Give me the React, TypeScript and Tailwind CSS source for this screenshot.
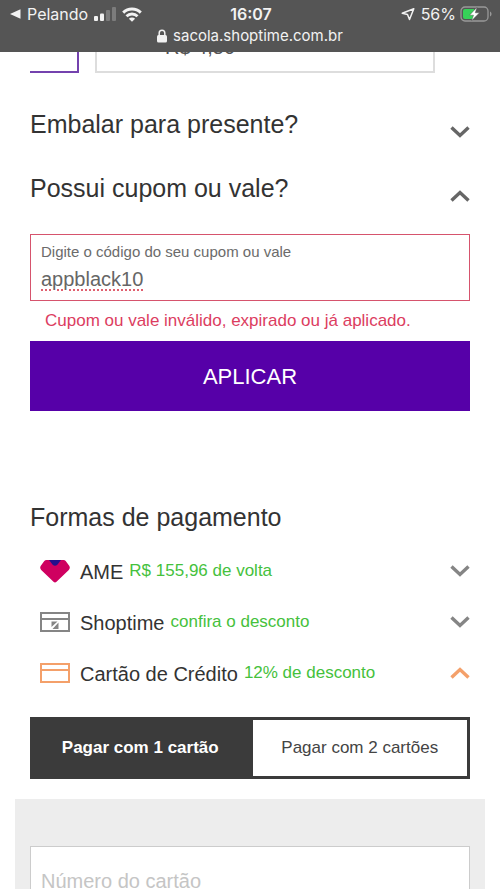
import { useState, type ReactNode } from 'react';

function Chevron({ up = false, className = '' }: { up?: boolean; className?: string }) {
  return (
    <svg viewBox="0 0 20 12" className={`h-3 w-5 shrink-0 ${className}`} fill="none" stroke="currentColor" strokeWidth="3.400" aria-hidden="true">
      <path d={up ? 'M1.500 10.500 10 2.500 18.500 10.500' : 'M1.500 1.500 10 9.500 18.500 1.500'} />
    </svg>
  );
}

function StatusBar() {
  return (
    <header className="z-10 h-[52px] shrink-0 bg-[#555555] font-['Inter','Liberation_Sans',sans-serif] text-base leading-5 text-[#f2f2f2]">
      <div className="grid h-7 grid-cols-3 items-center pr-2 pl-2.5">
        <div className="flex items-center gap-1.5">
          <svg viewBox="0 0 11 10" className="h-2.5 w-[11px] shrink-0" fill="currentColor" aria-hidden="true">
            <path d="M0 5 10.500 .3v9.400z" />
          </svg>
          <span>Pelando</span>
          <svg viewBox="0 0 22 14" className="h-3.5 w-[22px] shrink-0" fill="currentColor" aria-hidden="true">
            <rect x="0" y="9" width="4" height="5" rx="1" />
            <rect x="6" y="6.500" width="4" height="7.500" rx="1" />
            <rect x="12" y="3" width="4" height="11" rx="1" opacity=".25" />
            <rect x="18" y="0" width="4" height="14" rx="1" opacity=".25" />
          </svg>
          <svg viewBox="0 0 20 15" className="h-[15px] w-5 shrink-0" fill="none" stroke="currentColor" strokeWidth="2.900" aria-hidden="true">
            <path d="M1.200 5.600a12.500 12.500 0 0 1 17.600 0" />
            <path d="M4.500 9.200a7.800 7.800 0 0 1 11 0" />
            <path d="M10 14.800 6.900 11.700a4.400 4.400 0 0 1 6.200 0z" fill="currentColor" stroke="none" />
          </svg>
        </div>
        <time className="text-center font-semibold">16:07</time>
        <div className="flex items-center justify-end gap-1">
          <svg viewBox="0 0 14 14" className="mr-0.5 h-3.5 w-3.5" fill="none" stroke="currentColor" strokeWidth="1.500" strokeLinejoin="round" aria-hidden="true">
            <path d="M12.800 1.800 1.200 6.200l5.300 1.300 2 5z" />
          </svg>
          <span>56%</span>
          <svg viewBox="0 0 32 16" className="h-4 w-8" aria-hidden="true">
            <rect x="1" y="1" width="27" height="14" rx="4" fill="none" stroke="#999999" strokeWidth="1.300" />
            <path d="M5 3h9v10H5a2 2 0 0 1-2-2V5a2 2 0 0 1 2-2z" fill="#36d158" />
            <path d="M30 5.500c2 .8 2 4.200 0 5z" fill="#999999" />
            <path d="M17 1.200 9.500 9.200h4l-2 5.600L19.500 6.800h-4.200z" fill="#ffffff" stroke="#555555" strokeWidth=".5" />
          </svg>
        </div>
      </div>
      <div className="flex h-4 items-center justify-center gap-1.5 text-[15px]">
        <svg viewBox="0 0 10 14" className="h-3.5 w-2.5" aria-hidden="true">
          <path d="M2.200 7V4a2.800 2.800 0 0 1 5.600 0v3" fill="none" stroke="currentColor" strokeWidth="1.500" />
          <rect x="0" y="6" width="10" height="7.500" rx="1.500" fill="currentColor" />
        </svg>
        <span>sacola.shoptime.com.br</span>
      </div>
    </header>
  );
}

function AmeIcon() {
  return (
    <svg viewBox="0 0 30 23" className="h-[23px] w-[30px]" aria-hidden="true">
      <path d="M6.500 0h17a3 3 0 0 1 2.200 1l3.500 4.700q1.400 2.200-.4 4.200L16.500 21.800q-1.500 1.500-3 0L1.200 9.900Q-.6 7.900.8 5.700L4.300 1A3 3 0 0 1 6.500 0z" fill="#cf0060" />
      <path d="M9 0h12l-3.500 4.500q-2.500 2.400-5 0z" fill="#23108c" />
    </svg>
  );
}

function CardIcon({ store = false }: { store?: boolean }) {
  return (
    <svg viewBox="0 0 30 20" className="h-5 w-[30px]" fill="none" stroke="currentColor" strokeWidth="2" aria-hidden="true">
      <path d="M1 1h28v18H1z" />
      <path d="M1 7h28" />
      {store && <path d="M11.500 9.500h6l-6 5.500zM18.500 10.500V17H12.500z" fill="currentColor" stroke="none" />}
    </svg>
  );
}

function AccordionRow({ title, open, onToggle }: { title: string; open: boolean; onToggle: () => void }) {
  return (
    <h2>
      <button type="button" aria-expanded={open} onClick={onToggle} className="flex w-full items-start justify-between text-left text-[25px] leading-8">
        {title}
        <Chevron up={open} className="mt-[18px] text-[#666666]" />
      </button>
    </h2>
  );
}

type PaymentProps = {
  icon: ReactNode;
  name: string;
  offer: string;
  open?: boolean;
};

function PaymentRow({ icon, name, offer, open = false }: PaymentProps) {
  const tone = open ? 'text-[#f4a06a]' : 'text-[#858585]';
  return (
    <li>
      <button type="button" aria-expanded={open} className="flex w-full items-center pl-2.5 text-left">
        <span className={`mr-2.5 shrink-0 ${tone}`}>{icon}</span>
        <span className="flex grow items-center gap-1.5">
          <span className="pt-0.5 text-xl leading-6">{name}</span>
          <span className="text-[17px] leading-6 text-[#45c13c]">{offer}</span>
        </span>
        <Chevron up={open} className={tone} />
      </button>
    </li>
  );
}

export default function App() {
  const [giftOpen, setGiftOpen] = useState(false);
  const [couponOpen, setCouponOpen] = useState(true);
  const [coupon, setCoupon] = useState('appblack10');
  const [cards, setCards] = useState(1);

  const tabClass = (active: boolean) =>
    active ? 'bg-[#3b3b3b] font-bold text-white' : 'bg-white text-[#444444]';

  return (
    <div className="flex h-screen flex-col overflow-hidden bg-white font-['Liberation_Sans',Arial,sans-serif] text-[#333333]">
      <StatusBar />
      <main className="min-h-0 grow overflow-hidden">
        <div className="-mt-[19px] ml-[30px] flex gap-4">
          <div className="h-10 w-[49px] border-r-2 border-b-2 border-[#7442ae]" />
          <div className="mr-[65px] h-10 grow border-x-2 border-b-2 border-[#dddddd] pl-[68px] text-xl leading-7 text-[#555555]">R$ 4,50</div>
        </div>

        <div className="px-[30px] pt-[35px]">
          <AccordionRow title="Embalar para presente?" open={giftOpen} onToggle={() => setGiftOpen(!giftOpen)} />
          <div className="pt-8">
            <AccordionRow title="Possui cupom ou vale?" open={couponOpen} onToggle={() => setCouponOpen(!couponOpen)} />
          </div>

          {couponOpen && (
            <form className="mt-[30px]" onSubmit={(e) => e.preventDefault()}>
              <div className="border border-[#d6536d] px-2.5 pt-[7px] pb-1">
                <label htmlFor="coupon" className="block text-[15px] leading-5 text-[#6b6b6b]">
                  Digite o código do seu cupom ou vale
                </label>
                <input
                  id="coupon"
                  value={coupon}
                  onChange={(e) => setCoupon(e.target.value)}
                  aria-invalid="true"
                  aria-describedby="coupon-error"
                  spellCheck={false}
                  className="block h-[34px] w-full text-xl leading-8 text-[#666666] underline decoration-[#e06070] decoration-dotted decoration-2 underline-offset-4 outline-none"
                />
              </div>
              <p id="coupon-error" className="pt-[7px] pb-[7px] pl-[15px] text-[17px] leading-[26px] text-[#dc3d5f]">
                Cupom ou vale inválido, expirado ou já aplicado.
              </p>
              <button type="submit" className="h-[70px] w-full bg-[#5600a8] text-[22px] text-white">
                APLICAR
              </button>
            </form>
          )}

          <h2 className="mt-[90px] text-[25px] leading-8">Formas de pagamento</h2>
          <ul className="mt-[25px] flex flex-col gap-[25px]">
            <PaymentRow icon={<AmeIcon />} name="AME" offer="R$ 155,96 de volta" />
            <PaymentRow icon={<CardIcon store />} name="Shoptime" offer="confira o desconto" />
            <PaymentRow icon={<CardIcon />} name="Cartão de Crédito" offer="12% de desconto" open />
          </ul>

          <div role="tablist" className="mt-[31px] flex h-[62px] border-3 border-[#3b3b3b] text-[17px]">
            <button type="button" role="tab" aria-selected={cards === 1} onClick={() => setCards(1)} className={`grow pr-8 pl-[27px] ${tabClass(cards === 1)}`}>
              Pagar com 1 cartão
            </button>
            <button type="button" role="tab" aria-selected={cards === 2} onClick={() => setCards(2)} className={`grow px-[27px] ${tabClass(cards === 2)}`}>
              Pagar com 2 cartões
            </button>
          </div>
        </div>

        <section className="mx-[15px] mt-5 bg-[#ededed] px-[15px] pt-[47px] pb-8">
          <input
            aria-label="Número do cartão"
            placeholder="Número do cartão"
            inputMode="numeric"
            className="block h-[70px] w-full border border-[#cccccc] bg-white px-2.5 text-xl text-[#444444] placeholder:text-[#c5c5c5] outline-none"
          />
        </section>
      </main>
    </div>
  );
}
